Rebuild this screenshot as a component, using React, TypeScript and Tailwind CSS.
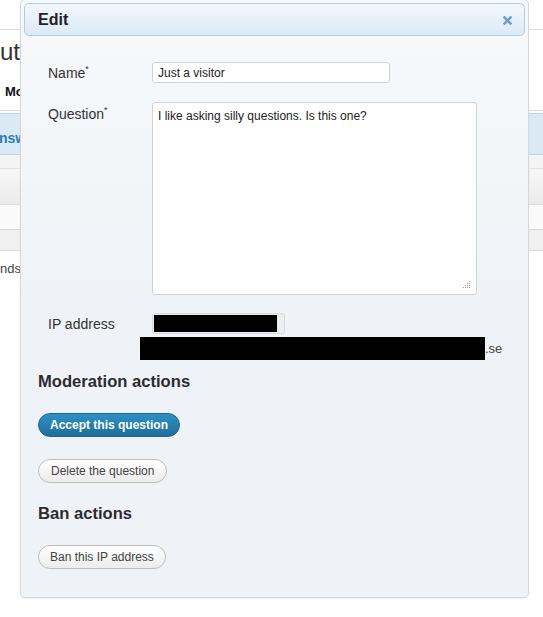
import React from "react";

const font = { fontFamily: '"Liberation Sans", Arial, sans-serif' };

function Background() {
  return (
    <div className="w-[543px] h-[617px] bg-white text-[#333]">
      <div className="h-[30px] border-b border-[#dcdcdc]" />
      <div className="h-[34px] pt-[8px] text-[24px] leading-[28px] text-[#333]">ut</div>
      <div className="h-[46px] pt-[20px] pl-[5px] text-[13px] font-bold leading-[16px] text-[#111]">Mo</div>
      <div className="h-[3px] border-t border-[#dcdcdc] bg-white" />
      <div className="h-[42px] bg-[#dbe9f6] border-t border-[#a9cdeb] border-b border-[#b9d6ee] flex items-center pt-[8px] text-[14px] font-bold text-[#2b7bb9]">
        <span className="-ml-[1px]">nsw</span>
      </div>
      <div className="h-[14px] bg-[#f4f4f4] border-b border-[#e2e2e2]" />
      <div className="h-[36px] bg-gradient-to-b from-[#f7f7f7] to-[#ebebeb] border-b border-[#dedede]" />
      <div className="h-[25px] bg-[#fafafa] border-b border-[#d5d5d5]" />
      <div className="h-[21px] bg-[#f0f0f0] border-b border-[#dcdcdc]" />
      <div className="pt-[10px] text-[13px] leading-[16px] text-[#444]">nds</div>
    </div>
  );
}

function Label({ children }: { children: React.ReactNode }) {
  return (
    <span className="text-[14px] text-[#333] leading-[16px]">
      {children}
    </span>
  );
}

function Star() {
  return <span className="relative -top-[6px] text-[9px] leading-[9px] text-[#333]">*</span>;
}

function Dialog() {
  return (
    <div
      className="absolute left-[20px] top-[-1px] w-[509px] h-[599px] rounded-[5px] border border-[#d4d8dc] bg-gradient-to-b from-[#f7f9fb] via-[#eff3f7] to-[#eff3f7] shadow-[0_1px_2px_rgba(0,0,0,0.06)]"
      style={font}
    >
      <div className="mx-[3px] mt-[3px] h-[33px] rounded-[5px] border border-[#a9cdea] bg-gradient-to-b from-[#f3f8fd] to-[#dce9f6] flex items-center justify-between pl-[13px] pr-[12px]">
        <span className="text-[16px] font-bold text-[#222]">Edit</span>
        <svg width="9" height="9" viewBox="0 0 9 9" className="mt-[1px]">
          <path d="M1.5 1.5 L7.5 7.5 M7.5 1.5 L1.5 7.5" stroke="#6e9fcb" strokeWidth="2.6" strokeLinecap="square" />
        </svg>
      </div>

      <div className="pl-[27px]">
        <div className="mt-[26px] flex items-center h-[21px]">
          <div className="w-[104px] leading-[16px]">
            <Label>
              Name<Star />
            </Label>
          </div>
          <div className="w-[238px] h-[21px] bg-white border border-[#cfd3d7] rounded-[3px] flex items-center pl-[5px] text-[12px] text-[#222]">
            Just a visitor
          </div>
        </div>

        <div className="mt-[19px] flex">
          <div className="w-[104px] pt-[4px] leading-[16px]">
            <Label>
              Question<Star />
            </Label>
          </div>
          <div className="relative w-[325px] h-[193px] bg-white border border-[#cfd3d7] rounded-[3px] pl-[5px] pt-[6px] text-[12px] leading-[14px] text-[#222]">
            I like asking silly questions. Is this one?
            <svg width="9" height="9" viewBox="0 0 9 9" className="absolute right-[5px] bottom-[5px]">
              <g fill="#999">
                <rect x="7" y="1" width="1" height="1" />
                <rect x="5" y="3" width="1" height="1" />
                <rect x="7" y="3" width="1" height="1" />
                <rect x="3" y="5" width="1" height="1" />
                <rect x="5" y="5" width="1" height="1" />
                <rect x="7" y="5" width="1" height="1" />
                <rect x="1" y="7" width="1" height="1" />
                <rect x="3" y="7" width="1" height="1" />
                <rect x="5" y="7" width="1" height="1" />
                <rect x="7" y="7" width="1" height="1" />
              </g>
            </svg>
          </div>
        </div>

        <div className="mt-[18px] flex items-center h-[21px]">
          <div className="w-[104px]">
            <Label>IP address</Label>
          </div>
          <div className="w-[133px] h-[21px] bg-[#eceeef] border border-[#d7dadd] rounded-[3px] p-[1px] pr-[7px]">
            <div className="h-full bg-black" />
          </div>
        </div>

        <div className="mt-[3px] ml-[92px] flex items-center">
          <div className="w-[345px] h-[23px] bg-black" />
          <span className="text-[13px] text-[#444] leading-[16px]">.se</span>
        </div>
      </div>

      <div className="pl-[17px]">
        <h3 className="mt-[12px] text-[16.6px] font-bold leading-[20px] text-[#2e2a33]">Moderation actions</h3>
        <div className="mt-[20px]">
          <button className="h-[24px] px-[11px] rounded-[12px] bg-gradient-to-b from-[#2c92c5] to-[#1f6d98] border border-[#1d6892] text-white text-[12px] font-bold leading-[14px]">
            Accept this question
          </button>
        </div>
        <div className="mt-[21px]">
          <button className="h-[24px] px-[12px] rounded-[12px] bg-gradient-to-b from-white to-[#ececec] border border-[#bdbdbd] text-[#444] text-[12px] leading-[14px]">
            Delete the question
          </button>
        </div>
        <h3 className="mt-[21px] text-[16.6px] font-bold leading-[20px] text-[#2e2a33]">Ban actions</h3>
        <div className="mt-[20px]">
          <button className="h-[24px] px-[11px] rounded-[12px] bg-gradient-to-b from-white to-[#ececec] border border-[#bdbdbd] text-[#444] text-[12px] leading-[14px]">
            Ban this IP address
          </button>
        </div>
      </div>
    </div>
  );
}

export default function App() {
  return (
    <div className="relative w-[543px] h-[617px] overflow-hidden bg-white" style={font}>
      <Background />
      <Dialog />
    </div>
  );
}
